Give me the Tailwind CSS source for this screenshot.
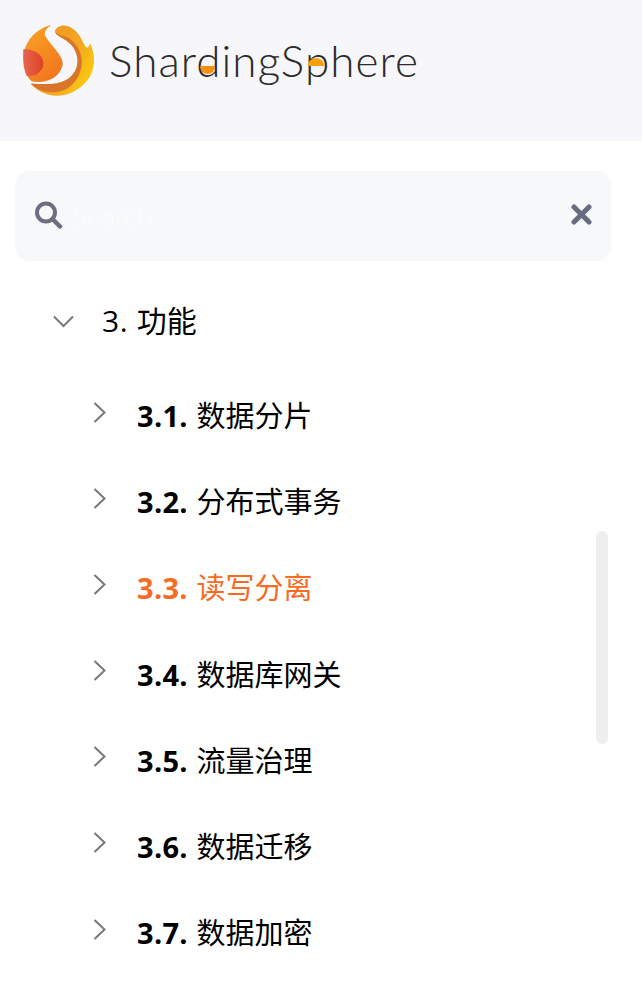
<!DOCTYPE html>
<html lang="en">
<head>
    <meta charset="UTF-8" />
    <meta name="viewport" content="width=device-width, initial-scale=1.0" />
    <title>ShardingSphere</title>
    <script src="https://cdn.jsdelivr.net/npm/@tailwindcss/browser@4"></script>
</head>
<body class="relative h-[981px] overflow-hidden bg-white font-['Open_Sans','Noto_Sans_CJK_SC',sans-serif] text-black">

    <header class="flex h-[141px] items-start bg-[#f6f6fb] pl-[23px] pt-[24px]">
        <svg class="h-[72px] w-[72px] shrink-0" viewBox="69 71 216 216">
            <defs>
                <linearGradient id="body" x1="0" y1="0" x2="0.6" y2="1">
                    <stop offset="0" stop-color="#f7a823" />
                    <stop offset="1" stop-color="#f4761f" />
                </linearGradient>
                <linearGradient id="red" x1="0" y1="0" x2="1" y2="0">
                    <stop offset="0" stop-color="#e8654f" />
                    <stop offset="1" stop-color="#dd4327" />
                </linearGradient>
                <linearGradient id="flame" x1="0" y1="0" x2="1" y2="0.6">
                    <stop offset="0" stop-color="#ef8f2a" />
                    <stop offset="0.7" stop-color="#f4a81f" />
                    <stop offset="1" stop-color="#f9c80f" />
                </linearGradient>
            </defs>
            <path fill="url(#body)" d="M155 74C105 85 70 125 70 180C70 210 80 230 95 243C130 250 175 240 188 195C192 165 150 135 135 105C132 90 145 80 155 74Z" />
            <path fill="url(#red)" d="M70 147C105 145 130 165 130 190C130 212 105 232 80 226C72 205 68 170 70 147Z" />
            <path fill="url(#flame)" d="M165 92C170 72 210 62 240 108C252 130 262 160 270 128C288 165 286 210 262 240C240 268 205 288 170 286C135 285 112 270 92 250C120 250 170 258 205 235C240 210 240 165 215 135C195 112 165 108 165 92Z" />
            <path fill="#d9752a" d="M165 92C165 108 195 112 215 135C240 165 240 210 205 235C170 258 120 250 92 250C112 270 150 282 185 272C225 258 250 215 245 175C240 145 225 125 205 112C190 105 170 105 165 92Z" />
        </svg>
        <div class="relative ml-[14px] mt-[6px] text-[44px] leading-[60px] font-light tracking-[1.07px] text-[#2b2b2b] font-['Lato',sans-serif]">
            ShardingSphere
            <span class="absolute left-[91px] top-[36px] h-[8px] w-[15px] rounded-b-full bg-[#f98f0c]"></span>
            <span class="absolute left-[199px] top-[28px] h-[8px] w-[16px] rounded-t-full bg-[#f9a00c]"></span>
        </div>
    </header>

    <div class="pl-[15px] pr-[31px] pt-[30px]">
        <div class="flex h-[90px] items-center rounded-[14px] bg-[#f6f8fa] pl-[19px] pr-[19px]">
            <svg class="mb-[2px] h-[29px] w-[29px] shrink-0" viewBox="0 0 29 29" fill="none" stroke="#6b6f80" stroke-linecap="round">
                <circle cx="12" cy="11.5" r="9" stroke-width="4" />
                <path d="M19 18.5l7 7" stroke-width="4.5" />
            </svg>
            <span class="ml-[9px] flex-1 text-[28px] font-light text-[#fbfcfd] font-['Lato',sans-serif]">Search...</span>
            <svg class="mb-[4px] h-[21px] w-[21px] shrink-0" viewBox="0 0 21 21" stroke="#676b80" stroke-width="5" stroke-linecap="round">
                <path d="M3 3l15 15M18 3L3 18" />
            </svg>
        </div>
    </div>

    <nav class="text-[29px] leading-[40px]">
        <div class="mt-[40px] flex h-[40px] items-center">
            <svg class="ml-[53px] h-[13px] w-[21px]" viewBox="0 0 21 13" fill="none" stroke="#77787c" stroke-width="2">
                <path d="M1 1.5l9.5 9.5 9.5-9.5" />
            </svg>
            <span class="ml-[28px] text-[30px]"><span class="mr-[1px] tracking-[0.5px]">3.</span> 功能</span>
        </div>
        <ul class="mt-[55px] flex flex-col gap-[46.2px]">
            <li class="flex h-[40px] items-center">
                <svg class="mb-[8px] ml-[93px] h-[21px] w-[14px]" viewBox="0 0 14 21" fill="none" stroke="#77787c" stroke-width="2"><path d="M1.5 1l10 9.5-10 9.5" /></svg>
                <span class="ml-[30px]"><b class="mr-[1px] tracking-[0.3px]">3.1.</b> 数据分片</span>
            </li>
            <li class="flex h-[40px] items-center">
                <svg class="mb-[8px] ml-[93px] h-[21px] w-[14px]" viewBox="0 0 14 21" fill="none" stroke="#77787c" stroke-width="2"><path d="M1.5 1l10 9.5-10 9.5" /></svg>
                <span class="ml-[30px]"><b class="mr-[1px] tracking-[0.3px]">3.2.</b> 分布式事务</span>
            </li>
            <li class="flex h-[40px] items-center">
                <svg class="mb-[8px] ml-[93px] h-[21px] w-[14px]" viewBox="0 0 14 21" fill="none" stroke="#77787c" stroke-width="2"><path d="M1.5 1l10 9.5-10 9.5" /></svg>
                <span class="ml-[30px] text-[#f96a22]"><b class="mr-[1px] tracking-[0.3px]">3.3.</b> 读写分离</span>
            </li>
            <li class="flex h-[40px] items-center">
                <svg class="mb-[8px] ml-[93px] h-[21px] w-[14px]" viewBox="0 0 14 21" fill="none" stroke="#77787c" stroke-width="2"><path d="M1.5 1l10 9.5-10 9.5" /></svg>
                <span class="ml-[30px]"><b class="mr-[1px] tracking-[0.3px]">3.4.</b> 数据库网关</span>
            </li>
            <li class="flex h-[40px] items-center">
                <svg class="mb-[8px] ml-[93px] h-[21px] w-[14px]" viewBox="0 0 14 21" fill="none" stroke="#77787c" stroke-width="2"><path d="M1.5 1l10 9.5-10 9.5" /></svg>
                <span class="ml-[30px]"><b class="mr-[1px] tracking-[0.3px]">3.5.</b> 流量治理</span>
            </li>
            <li class="flex h-[40px] items-center">
                <svg class="mb-[8px] ml-[93px] h-[21px] w-[14px]" viewBox="0 0 14 21" fill="none" stroke="#77787c" stroke-width="2"><path d="M1.5 1l10 9.5-10 9.5" /></svg>
                <span class="ml-[30px]"><b class="mr-[1px] tracking-[0.3px]">3.6.</b> 数据迁移</span>
            </li>
            <li class="flex h-[40px] items-center">
                <svg class="mb-[8px] ml-[93px] h-[21px] w-[14px]" viewBox="0 0 14 21" fill="none" stroke="#77787c" stroke-width="2"><path d="M1.5 1l10 9.5-10 9.5" /></svg>
                <span class="ml-[30px]"><b class="mr-[1px] tracking-[0.3px]">3.7.</b> 数据加密</span>
            </li>
        </ul>
    </nav>

    <div class="absolute left-[596px] top-[531px] h-[213px] w-[12px] rounded-full bg-[#eeeeee]"></div>
</body>
</html>
